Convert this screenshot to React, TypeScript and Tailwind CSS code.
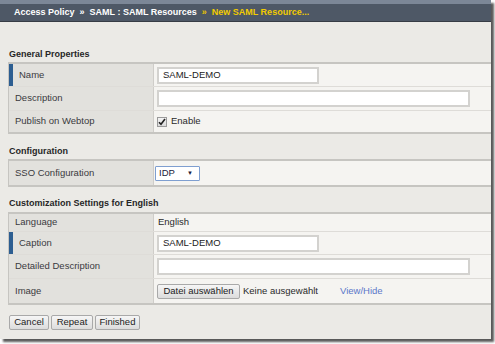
import React from "react";

type RowProps = {
  label: string;
  marked?: boolean;
  h: string;
  last?: boolean;
  children?: React.ReactNode;
};

const Row = ({ label, marked, h, last, children }: RowProps) => {
  return (
    <div className={`flex ${h} ${last ? "" : "border-b border-[#dedcd8]"}`}>
      <div className="w-[145px] shrink-0 flex items-center bg-[#e2e1dd] border-r border-[#cfcdc9]">
        {marked && <div className="w-[4px] self-stretch bg-[#2d5e91]" />}
        <span className="pl-[6px] text-[#3a3a40]">{label}</span>
      </div>
      <div className="flex-1 flex items-center pl-[3px] bg-[#f5f4f1]">{children}</div>
    </div>
  );
};

const Table = ({ children }: { children: React.ReactNode }) => (
  <div className="ml-[8px] border-y-2 border-l border-[#c6c5c1]">{children}</div>
);

const Heading = ({ text, className }: { text: string; className: string }) => (
  <div className={`pl-[9px] h-[14px] leading-[14px] font-bold text-[#262626] ${className}`}>{text}</div>
);

const TextInput = ({ value, w }: { value?: string; w: string }) => (
  <div className={`${w} h-[17px] bg-white border-2 border-[#d3d2cf] flex items-center pl-[4px] text-[#222]`}>
    {value}
  </div>
);

const Btn = ({ text, w }: { text: string; w: string }) => (
  <div className={`${w} shrink-0 whitespace-nowrap h-[15px] flex items-center justify-center border border-[#a9a9a9] rounded-[2px] bg-gradient-to-b from-[#f6f6f6] to-[#dcdcdc] text-[#222]`}>
    {text}
  </div>
);

export default function App() {
  return (
    <div className="w-[495px] h-[344px] bg-white text-[9.5px] font-['Liberation_Sans']">
      <div className="w-[491px] h-[339px] bg-[#ebeae6] shadow-[3px_3px_2px_rgba(0,0,0,0.65)]">
        <div className="h-[4px] bg-[#7c8797]" />
        <div className="h-[18px] bg-[#4e5866] border-b border-[#363c45] flex items-center pl-[14px] font-bold text-[9px] text-white gap-[5px] whitespace-nowrap">
          <span>Access Policy</span>
          <span className="text-[9px]">»</span>
          <span>SAML : SAML Resources</span>
          <span className="text-[9px] text-[#e9c400]">»</span>
          <span className="text-[#f2cb00]">New SAML Resource...</span>
        </div>

        <Heading text="General Properties" className="mt-[25px] mb-[1px] text-[9px]" />
        <Table>
          <Row label="Name" marked h="h-[23px]">
            <TextInput value="SAML-DEMO" w="w-[162px]" />
          </Row>
          <Row label="Description" h="h-[24px]">
            <TextInput w="w-[313px]" />
          </Row>
          <Row label="Publish on Webtop" h="h-[21px]" last>
            <div className="flex items-center gap-[4px] text-[#2a2a2a]">
              <div className="w-[10px] h-[10px] border border-[#9a9a9a] bg-gradient-to-b from-[#f4f4f4] to-[#dadada] flex items-center justify-center">
                <svg width="8" height="8" viewBox="0 0 8 8">
                  <path d="M1 4.2 L3 6.3 L7 1" fill="none" stroke="#222" strokeWidth="1.6" />
                </svg>
              </div>
              <span>Enable</span>
            </div>
          </Row>
        </Table>

        <Heading text="Configuration" className="mt-[10px] mb-[1px] text-[9px]" />
        <Table>
          <Row label="SSO Configuration" h="h-[24px]" last>
            <div className="-ml-[2px] w-[45px] h-[15px] bg-white border border-[#7f9fd0] rounded-[1px] flex items-center justify-between pl-[3px] pr-[6px] text-[#1a1a3a]">
              <span>IDP</span>
              <span className="text-[6px]">▼</span>
            </div>
          </Row>
        </Table>

        <Heading text="Customization Settings for English" className="mt-[9px] mb-[2px] text-[9px]" />
        <Table>
          <Row label="Language" h="h-[18px]">
            <span className="pl-[1px] text-[#2a2a2a]">English</span>
          </Row>
          <Row label="Caption" marked h="h-[23px]">
            <TextInput value="SAML-DEMO" w="w-[162px]" />
          </Row>
          <Row label="Detailed Description" h="h-[24px]">
            <TextInput w="w-[313px]" />
          </Row>
          <Row label="Image" h="h-[24px]" last>
            <div className="flex items-center text-[#2a2a2a] whitespace-nowrap">
              <Btn text="Datei auswählen" w="w-[83px]" />
              <span className="ml-[3px]">Keine ausgewählt</span>
              <span className="ml-[22px] text-[#5a77c9]">View/Hide</span>
            </div>
          </Row>
        </Table>

        <div className="flex gap-[2px] ml-[9px] mt-[10px]">
          <Btn text="Cancel" w="w-[40px]" />
          <Btn text="Repeat" w="w-[42px]" />
          <Btn text="Finished" w="w-[45px]" />
        </div>
      </div>
    </div>
  );
}
